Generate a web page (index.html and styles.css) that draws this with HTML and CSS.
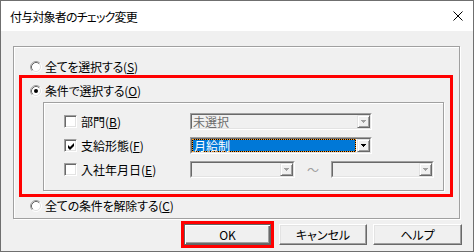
FILE: index.html
```html
<!DOCTYPE html>
<html lang="ja">
<head>
  <meta charset="UTF-8">
  <title>付与対象者のチェック変更</title>
  <link rel="stylesheet" href="styles.css">
</head>
<body>
  <div class="window">
    <div class="titlebar">
      <span class="title">付与対象者のチェック変更</span>
      <svg class="close" viewBox="0 0 10 10" width="10" height="10">
        <path d="M0.5 0.5 L9.5 9.5 M9.5 0.5 L0.5 9.5" stroke="#000" stroke-width="1"/>
      </svg>
    </div>

    <div class="group">
      <div class="radio-row outer">
        <svg class="radio" viewBox="0 0 12 12" width="12" height="12">
          <circle cx="6" cy="6" r="4.5" fill="#fff"/>
          <path d="M2.11 9.89 A5.5 5.5 0 0 1 9.89 2.11" stroke="#a0a0a0" fill="none"/>
          <path d="M9.89 2.11 A5.5 5.5 0 0 1 2.11 9.89" stroke="#fff" fill="none"/>
          <path d="M2.82 9.18 A4.5 4.5 0 0 1 9.18 2.82" stroke="#696969" fill="none"/>
          <path d="M9.18 2.82 A4.5 4.5 0 0 1 2.82 9.18" stroke="#e3e3e3" fill="none"/>
        </svg>
        <span>全てを選択する(<u>S</u>)</span>
      </div>

      <div class="mark">
        <div class="radio-row">
          <svg class="radio" viewBox="0 0 12 12" width="12" height="12">
            <circle cx="6" cy="6" r="4.5" fill="#fff"/>
            <path d="M2.11 9.89 A5.5 5.5 0 0 1 9.89 2.11" stroke="#a0a0a0" fill="none"/>
            <path d="M9.89 2.11 A5.5 5.5 0 0 1 2.11 9.89" stroke="#fff" fill="none"/>
            <path d="M2.82 9.18 A4.5 4.5 0 0 1 9.18 2.82" stroke="#696969" fill="none"/>
            <path d="M9.18 2.82 A4.5 4.5 0 0 1 2.82 9.18" stroke="#e3e3e3" fill="none"/>
            <circle cx="6" cy="6" r="2" fill="#000"/>
          </svg>
          <span>条件で選択する(<u>O</u>)</span>
        </div>

        <div class="inner">
          <div class="cond">
            <span class="check"></span>
            <span class="cond-label">部門(<u>B</u>)</span>
            <div class="combo wide disabled">
              <div class="combo-in">
                <span class="field">未選択</span>
                <span class="drop"><svg width="5" height="3" viewBox="0 0 5 3"><path d="M0 0h5v1h-1v1h-1v1h-1v-1h-1v-1h-1z" fill="#a0a0a0"/></svg></span>
              </div>
            </div>
          </div>

          <div class="cond">
            <span class="check"><svg width="9" height="9" viewBox="0 0 9 9"><path d="M1 3 L3 5 L7 1 L7 4 L3 8 L1 6 Z" fill="#000"/></svg></span>
            <span class="cond-label">支給形態(<u>F</u>)</span>
            <div class="combo wide">
              <div class="combo-in">
                <span class="field selected">月給制</span>
                <span class="drop"><svg width="5" height="3" viewBox="0 0 5 3"><path d="M0 0h5v1h-1v1h-1v1h-1v-1h-1v-1h-1z" fill="#000"/></svg></span>
              </div>
            </div>
          </div>

          <div class="cond">
            <span class="check"></span>
            <span class="cond-label">入社年月日(<u>E</u>)</span>
            <div class="combo date-from disabled">
              <div class="combo-in">
                <span class="field"></span>
                <span class="drop"><svg width="5" height="3" viewBox="0 0 5 3"><path d="M0 0h5v1h-1v1h-1v1h-1v-1h-1v-1h-1z" fill="#a0a0a0"/></svg></span>
              </div>
            </div>
            <span class="tilde">〜</span>
            <div class="combo date-to disabled">
              <div class="combo-in">
                <span class="field"></span>
                <span class="drop"><svg width="5" height="3" viewBox="0 0 5 3"><path d="M0 0h5v1h-1v1h-1v1h-1v-1h-1v-1h-1z" fill="#a0a0a0"/></svg></span>
              </div>
            </div>
          </div>
        </div>
      </div>

      <div class="radio-row outer">
        <svg class="radio" viewBox="0 0 12 12" width="12" height="12">
          <circle cx="6" cy="6" r="4.5" fill="#fff"/>
          <path d="M2.11 9.89 A5.5 5.5 0 0 1 9.89 2.11" stroke="#a0a0a0" fill="none"/>
          <path d="M9.89 2.11 A5.5 5.5 0 0 1 2.11 9.89" stroke="#fff" fill="none"/>
          <path d="M2.82 9.18 A4.5 4.5 0 0 1 9.18 2.82" stroke="#696969" fill="none"/>
          <path d="M9.18 2.82 A4.5 4.5 0 0 1 2.82 9.18" stroke="#e3e3e3" fill="none"/>
        </svg>
        <span>全ての条件を解除する(<u>C</u>)</span>
      </div>
    </div>

    <div class="buttons">
      <div class="ok-mark"><button class="btn default">OK</button></div>
      <button class="btn cancel">キャンセル</button>
      <button class="btn help">ヘルプ</button>
    </div>
  </div>
</body>
</html>
```

FILE: styles.css
```css
body {
  margin: 0;
  background: #fff;
  font-family: "Noto Sans CJK JP", "Noto Sans", sans-serif;
  font-size: 12px;
  color: #000;
  font-feature-settings: "palt";
}
.window {
  width: 474px;
  height: 252px;
  box-sizing: border-box;
  border: 1px solid #6f6f6f;
  background: #f0f0f0;
}
.titlebar {
  height: 30px;
  background: #fff;
  display: flex;
  align-items: center;
  justify-content: space-between;
  padding: 0 10px 0 9px;
}
.title { letter-spacing: -0.8px; }
.close { display: block; }

/* outer group box */
.group {
  margin: 15px 0 0 12px;
  width: 447px;
  height: 173px;
  box-sizing: border-box;
  padding-top: 11px;
  border: 1px solid #a0a0a0;
  box-shadow: 1px 1px 0 #fff, inset 1px 1px 0 #fff;
}
.radio-row {
  display: flex;
  align-items: center;
  gap: 3px;
  height: 17px;
  line-height: 17px;
  padding-left: 8px;
  letter-spacing: -0.2px;
}
.radio-row.outer { padding-left: 16px; }
.radio { display: block; flex: none; }

/* red highlight */
.mark {
  margin: 0 0 0 5px;
  width: 434px;
  height: 122px;
  box-sizing: border-box;
  border: 3px solid #ff0000;
  padding-top: 4px;
}
.inner {
  margin: 3px 0 0 21px;
  width: 401px;
  height: 89px;
  box-sizing: border-box;
  padding-top: 10px;
  border: 1px solid #a0a0a0;
  box-shadow: 1px 1px 0 #fff, inset 1px 1px 0 #fff;
}
.cond {
  display: flex;
  align-items: center;
  height: 17px;
  line-height: 17px;
  margin-bottom: 7px;
}
.check {
  margin-left: 20px;
  width: 13px;
  height: 13px;
  box-sizing: border-box;
  border: 1px solid;
  border-color: #a0a0a0 #fff #fff #a0a0a0;
  box-shadow: inset 1px 1px #696969, inset -1px -1px #e3e3e3;
  background: #fff;
  padding: 2px 0 0 2px;
}
.check svg { display: block; }
.cond-label {
  margin-left: 4px;
  width: 109px;
}

/* combo boxes */
.combo {
  height: 17px;
  box-sizing: border-box;
  border: 1px solid;
  border-color: #a0a0a0 #fff #fff #a0a0a0;
}
.combo-in {
  display: flex;
  height: 100%;
  box-sizing: border-box;
  border: 1px solid;
  border-color: #696969 #e3e3e3 #e3e3e3 #696969;
  background: #fff;
}
.combo.disabled .combo-in { background: #f0f0f0; color: #6d6d6d; }
.combo.wide { width: 182px; }
.combo.date-from { width: 105px; }
.combo.date-to { width: 103px; }
.field {
  flex: 1;
  line-height: 13px;
  padding-left: 1px;
}
.field.selected {
  margin: 0 1px 0 0;
  border: 1px dotted #ff9a1e;
  background: linear-gradient(#0078d7, #0078d7) padding-box, border-box #000;
  color: #fff;
  line-height: 11px;
}
.drop {
  width: 13px;
  box-sizing: border-box;
  border: 1px solid;
  border-color: #e3e3e3 #696969 #696969 #e3e3e3;
  box-shadow: inset 1px 1px #fff, inset -1px -1px #a0a0a0;
  background: #f0f0f0;
  display: flex;
  align-items: center;
  justify-content: center;
}
.drop svg { display: block; }
.tilde {
  width: 36px;
  text-align: center;
  color: #a0a0a0;
}

/* buttons */
.buttons {
  display: flex;
  justify-content: flex-end;
  align-items: flex-start;
  padding: 2px 11px 0 0;
}
.ok-mark {
  border: 3px solid #ff0000;
  margin-right: 5px;
}
.btn {
  display: block;
  width: 87px;
  height: 21px;
  box-sizing: border-box;
  padding: 0;
  font: inherit;
  color: #000;
  background: #f0f0f0;
  border: 1px solid;
  border-color: #fff #696969 #696969 #fff;
  box-shadow: inset -1px -1px #a0a0a0, inset 1px 1px #e3e3e3;
}
.btn.cancel { margin-top: 3px; width: 88px; margin-right: 6px; }
.btn.help { margin-top: 3px; width: 89px; }
.btn.default {
  border-color: #646464;
  box-shadow: inset 1px 1px #fff, inset -1px -1px #696969, inset -2px -2px #a0a0a0;
}
```
